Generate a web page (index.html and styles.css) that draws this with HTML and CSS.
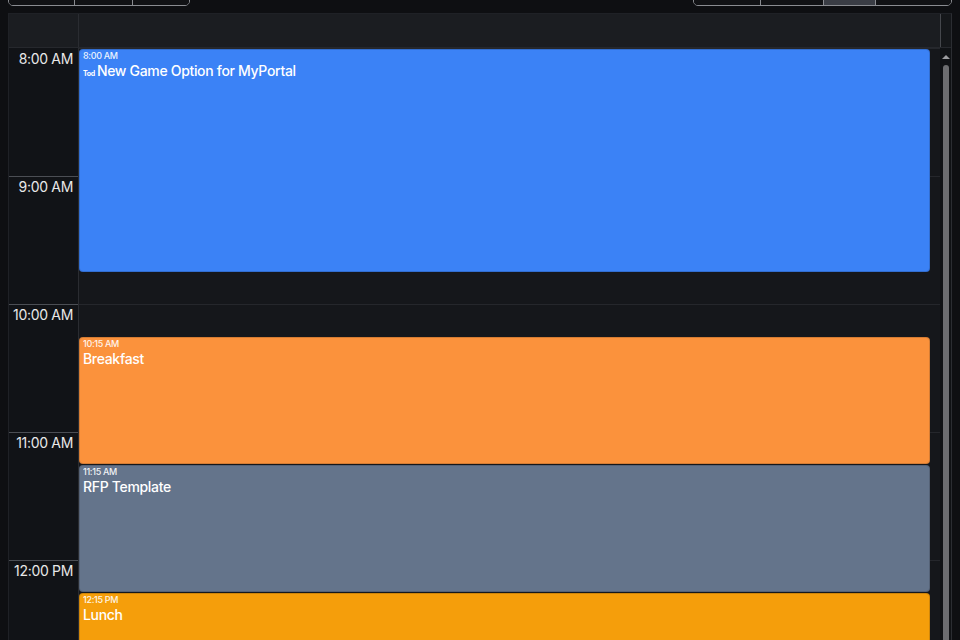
FILE: index.html
```html
<!DOCTYPE html>
<html lang="en">
  <head>
    <meta charset="UTF-8" />
    <meta name="viewport" content="width=device-width, initial-scale=1.0" />
    <link rel="stylesheet" href="styles.css">
    <title>Calendar - Day</title>
  </head>
  <body>
    <div class="toolbar">
      <div class="btn-group">
        <button>Today</button>
        <button>Back</button>
        <button>Next</button>
      </div>
      <div class="btn-group">
        <button>Month</button>
        <button>Week</button>
        <button class="active">Day</button>
        <button>Agenda</button>
      </div>
    </div>

    <div class="calendar">
      <div class="cal-head">
        <div class="gutter"></div>
        <div class="allday"></div>
        <div class="bar-gap"></div>
      </div>

      <div class="cal-body">
        <div class="times">
          <div class="hour">8:00 AM</div>
          <div class="hour">9:00 AM</div>
          <div class="hour">10:00 AM</div>
          <div class="hour">11:00 AM</div>
          <div class="hour">12:00 PM</div>
          <div class="hour">1:00 PM</div>
        </div>

        <!-- one grid row = 15 minutes, starting at 8:00 -->
        <div class="day">
          <div class="event blue" style="grid-row: 1 / 8">
            <div class="event-time">8:00 AM</div>
            <div class="event-title"><small>Tod</small>New Game Option for MyPortal</div>
          </div>
          <div class="event orange" style="grid-row: 10 / 14">
            <div class="event-time">10:15 AM</div>
            <div class="event-title">Breakfast</div>
          </div>
          <div class="event slate" style="grid-row: 14 / 18">
            <div class="event-time">11:15 AM</div>
            <div class="event-title">RFP Template</div>
          </div>
          <div class="event amber" style="grid-row: 18 / 22">
            <div class="event-time">12:15 PM</div>
            <div class="event-title">Lunch</div>
          </div>
        </div>

        <div class="scrollbar">
          <div class="scroll-up"></div>
          <div class="scroll-thumb"></div>
        </div>
      </div>
    </div>
  </body>
</html>
```

FILE: styles.css
```css
* {
  box-sizing: border-box;
}
html,
body {
  height: 100%;
  overflow: hidden;
}
body {
  margin: 0;
  background-color: #0e0f12;
  color: #e8e8e8;
  font-family: Inter, "Liberation Sans", sans-serif;
  letter-spacing: -0.02em;
}

/* toolbar */
.toolbar {
  display: flex;
  justify-content: space-between;
  margin: -26px 8px 7px;
}
.btn-group {
  display: flex;
  border: 1px solid #8a8c91;
  border-radius: 5px;
  overflow: hidden;
}
.btn-group button {
  height: 30px;
  padding: 0 13px;
  background-color: #111215;
  color: #ddd;
  border: 0;
  border-left: 1px solid #8a8c91;
  font: inherit;
  font-size: 14px;
  letter-spacing: inherit;
}
.btn-group button:first-child {
  border-left: 0;
}
.btn-group button.active {
  background-color: #3a3d45;
}

/* calendar frame */
.calendar {
  margin: 0 8px;
  border: 1px solid #1f2126;
  border-right-color: #2b2d32;
  border-bottom: 0;
  background-color: #15171b;
}
.cal-head {
  display: flex;
  height: 34px;
  background-color: #1b1d21;
  border-bottom: 1px solid #26282d;
}
.cal-head .gutter {
  width: 70px;
  border-right: 1px solid #2a2c31;
}
.cal-head .allday {
  flex: 1;
}
.cal-head .bar-gap {
  width: 11px;
  border-left: 1px solid #45474c;
  background-color: #15171a;
}

.cal-body {
  display: flex;
}
.times {
  width: 70px;
  border-right: 1px solid #2a2c31;
  background-color: #111317;
}
.hour {
  height: 128px;
  padding: 1px 5px 0 0;
  border-top: 1px solid #4b4e54;
  text-align: right;
  font-size: 14px;
  line-height: 18px;
}
.hour:first-child {
  border-top-color: transparent;
}

.day {
  flex: 1;
  display: grid;
  grid-template-rows: repeat(24, 32px);
  padding-right: 10px;
  background: repeating-linear-gradient(#25272c 0 1px, transparent 1px 128px);
}

/* events */
.event {
  margin-top: 1px;
  padding: 0 3px;
  border: 1px solid rgba(0, 0, 0, 0.15);
  border-radius: 4px;
  color: #fff;
  overflow: hidden;
}
.event-time {
  font-size: 9px;
  line-height: 12px;
  font-weight: 500;
  opacity: 0.9;
}
.event-title {
  font-size: 14px;
  line-height: 18px;
  font-weight: 500;
}
.event-title small {
  margin-right: 2px;
  font-size: 7px;
  font-weight: 700;
}
.event.blue {
  background-color: #3b82f6;
}
.event.orange {
  background-color: #fb923c;
}
.event.slate {
  background-color: #64748b;
}
.event.amber {
  background-color: #f59e0b;
}

/* scrollbar */
.scrollbar {
  width: 11px;
  display: flex;
  flex-direction: column;
  align-items: center;
  padding-top: 7px;
  background-color: #101215;
}
.scroll-up {
  width: 0;
  height: 0;
  border-left: 4px solid transparent;
  border-right: 4px solid transparent;
  border-bottom: 4px solid #9b9c9f;
}
.scroll-thumb {
  flex: 1;
  width: 6px;
  margin-top: 6px;
  border-radius: 3px;
  background-color: #6c6d70;
}
```
